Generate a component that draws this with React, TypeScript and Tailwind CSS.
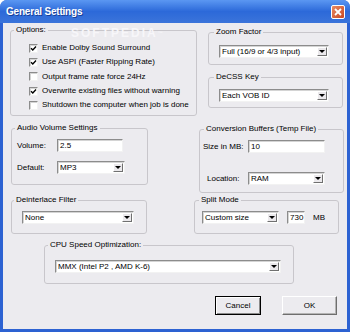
import React from "react"

const sunken =
  "border border-t-[#8c8c8c] border-l-[#8c8c8c] border-b-[#f2f2f2] border-r-[#f2f2f2] shadow-[inset_1px_1px_0_#d4d4d4]"

function GroupBox({
  title,
  className,
  legendClass = "ml-[3px]",
  children,
}: {
  title: string
  className: string
  legendClass?: string
  children: React.ReactNode
}) {
  return (
    <fieldset className={`border border-[#c8c6cb] rounded-[3px] ${className}`}>
      <legend className={`px-[2px] leading-[10px] ${legendClass}`}>{title}</legend>
      {children}
    </fieldset>
  )
}

function Combo({ value, className }: { value: string; className: string }) {
  return (
    <div className={`flex h-[13px] bg-white ${sunken} ${className}`}>
      <span className="flex-1 pl-[2px] leading-[11px] whitespace-nowrap overflow-hidden">{value}</span>
      <span className="w-[10px] my-[1px] mr-[1px] flex items-center justify-center bg-[#ebe9ec] border border-t-white border-l-white border-b-[#707070] border-r-[#707070]">
        <span className="w-0 h-0 border-x-[3px] border-x-transparent border-t-[3px] border-t-black" />
      </span>
    </div>
  )
}

function TextBox({ value, className }: { value: string; className: string }) {
  return (
    <div className={`h-[13px] bg-white pl-[2px] leading-[11px] ${sunken} ${className}`}>{value}</div>
  )
}

function Check({ label, checked }: { label: string; checked?: boolean }) {
  return (
    <div className="flex items-center h-[14.3px] pl-[18px]">
      <span className={`w-[9px] h-[9px] bg-white flex items-center justify-center ${sunken}`}>
        {checked && (
          <svg width="7" height="7" viewBox="0 0 7 7">
            <path d="M1 3.2 L2.8 5 L6 1.6" stroke="#000" strokeWidth="1.4" fill="none" />
          </svg>
        )}
      </span>
      <span className="ml-[4px] whitespace-nowrap">{label}</span>
    </div>
  )
}

const App = () => {
  return (
    <div className="w-[350px] h-[332px] bg-white">
      <div className="w-[350px] h-[332px] flex flex-col bg-[#2d62d2] rounded-t-[7px] overflow-hidden font-['Liberation_Sans',Arial,sans-serif]">
        {/* title bar */}
        <div className="h-[23px] flex items-center justify-between pl-[6px] pr-[5px] bg-gradient-to-b from-[#5b97f2] via-[#2c69d9] to-[#3b74da]">
          <span className="text-white font-bold text-[10px] tracking-[-0.2px] [text-shadow:1px_1px_0_#173f98]">
            General Settings
          </span>
          <span className="w-[14px] h-[14px] rounded-[2px] border border-white bg-gradient-to-br from-[#e98a62] to-[#c7461f] flex items-center justify-center">
            <svg width="8" height="8" viewBox="0 0 8 8">
              <path d="M1 1 L7 7 M7 1 L1 7" stroke="#fff" strokeWidth="1.8" />
            </svg>
          </span>
        </div>

        {/* client area */}
        <div className="relative flex-1 mx-[3px] mb-[3px] bg-[#ecebef] text-[8px] text-black">
          <span className="absolute left-[68px] top-[1px] text-[12px] font-bold tracking-[2px] text-[#f7f6f9]">
            SOFTPEDIA<sup className="text-[5px]">™</sup>
          </span>

          {/* row 1 */}
          <div className="flex items-start">
            <GroupBox title="Options:" className="ml-[7px] mt-[2px] w-[187px] h-[91px]">
              <div className="mt-[6px] flex flex-col">
                <Check label="Enable Dolby Sound Surround" checked />
                <Check label="Use ASPI (Faster Ripping Rate)" checked />
                <Check label="Output frame rate force 24Hz" />
                <Check label="Overwrite existing files without warning" checked />
                <Check label="Shutdown the computer when job is done" />
              </div>
            </GroupBox>

            <div className="ml-[11px] mt-[4px] w-[135px] flex flex-col">
              <GroupBox title="Zoom Factor" legendClass="ml-[5px]" className="h-[38px]">
                <Combo value="Full (16/9 or 4/3 input)" className="mt-[8px] ml-[10px] w-[110px]" />
              </GroupBox>
              <GroupBox title="DeCSS Key" legendClass="ml-[5px]" className="mt-[7px] h-[36px]">
                <Combo value="Each VOB ID" className="mt-[7px] ml-[10px] w-[110px]" />
              </GroupBox>
            </div>
          </div>

          {/* row 2 */}
          <div className="flex items-start">
            <GroupBox title="Audio Volume Settings" legendClass="ml-[3px]" className="ml-[8px] mt-[7px] w-[137px] h-[62px]">
              <div className="flex items-center mt-[6px] pl-[5px]">
                <span className="w-[40px]">Volume:</span>
                <TextBox value="2.5" className="w-[66px]" />
              </div>
              <div className="flex items-center mt-[9px] pl-[5px]">
                <span className="w-[40px]">Default:</span>
                <Combo value="MP3" className="w-[68px]" />
              </div>
            </GroupBox>

            <GroupBox title="Conversion Buffers (Temp File)" legendClass="ml-[4px]" className="ml-[51px] mt-[8px] w-[145px] h-[69px]">
              <div className="flex items-center mt-[6px] pl-[3px]">
                <span className="w-[45px]">Size in MB:</span>
                <TextBox value="10" className="w-[77px]" />
              </div>
              <div className="flex items-center mt-[19px] pl-[7px]">
                <span className="w-[41px]">Location:</span>
                <Combo value="RAM" className="w-[77px]" />
              </div>
            </GroupBox>
          </div>

          {/* row 3 */}
          <div className="flex items-start">
            <GroupBox title="Deinterlace Filter" legendClass="ml-[2px]" className="ml-[8px] mt-[2px] w-[136px] h-[39px]">
              <Combo value="None" className="mt-[6px] ml-[10px] w-[112px]" />
            </GroupBox>
            <GroupBox title="Split Mode" legendClass="ml-[4px]" className="ml-[47px] mt-[2px] w-[145px] h-[39px]">
              <div className="flex items-center mt-[6px] pl-[7px]">
                <Combo value="Custom size" className="w-[77px]" />
                <TextBox value="730" className="ml-[8px] w-[18px]" />
                <span className="ml-[8px]">MB</span>
              </div>
            </GroupBox>
          </div>

          {/* row 4 */}
          <GroupBox title="CPU Speed Optimization:" legendClass="ml-[3px]" className="ml-[41px] mt-[6px] w-[250px] h-[44px]">
            <Combo value="MMX (Intel P2 , AMD K-6)" className="mt-[10px] ml-[10px] w-[226px]" />
          </GroupBox>

          {/* buttons */}
          <div className="flex justify-end mt-[12px] mr-[10px] gap-[21px]">
            <button className="w-[46px] h-[19px] border border-black bg-[#ecebef] shadow-[inset_1px_1px_0_#fff,inset_-1px_-1px_0_#8a8a8a] text-[8px] leading-[17px]">
              Cancel
            </button>
            <button className="w-[55px] h-[19px] border border-t-white border-l-white border-r-[#6e6e6e] border-b-[#6e6e6e] bg-[#ecebef] shadow-[inset_-1px_-1px_0_#b4b4b4] text-[8px] leading-[17px]">
              OK
            </button>
          </div>
        </div>
      </div>
    </div>
  )
}

export default App
